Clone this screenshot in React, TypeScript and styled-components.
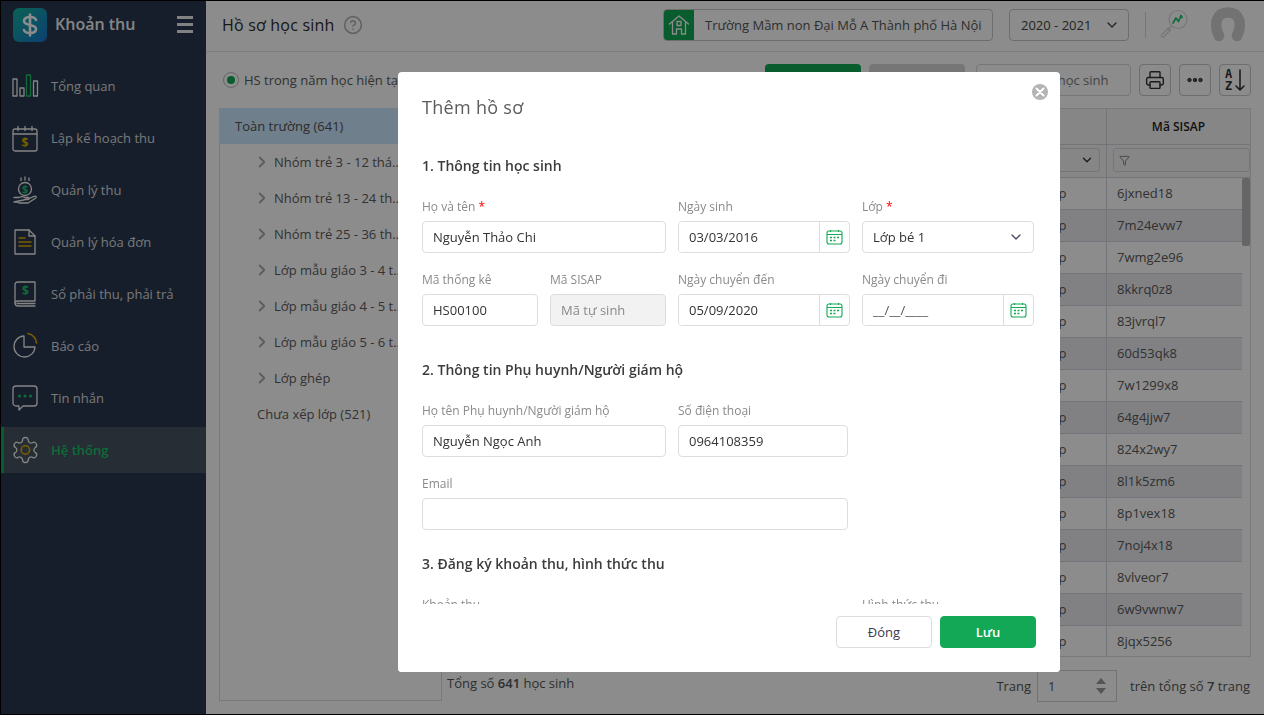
import React from 'react';
import styled, { createGlobalStyle } from 'styled-components';
import { ChevronDown, ChevronRight, CircleHelp, Printer, Funnel } from 'lucide-react';

const GREEN = '#12a855';
const STROKE = '#f2f2f2';
const GOLD = '#e0a800';
const ACCENT = '#1cc46a';

const Global = createGlobalStyle`
  * { box-sizing: border-box; }
  html, body { margin: 0; padding: 0; overflow: hidden; }
  body { font-family: "Open Sans", "Noto Sans", "Liberation Sans", sans-serif; font-size: 13px; color: #333; }
  input { font-family: inherit; }
`;

const Frame = styled.div`
  width: 1264px; height: 715px; display: flex; overflow: hidden;
  border-top: 1px solid #000; border-left: 1px solid #000; border-bottom: 1px solid #000;
  background: #fff;
`;
const Sidebar = styled.aside`
  width: 205px; flex: none; background: #28384f; display: flex; flex-direction: column;
`;
const Brand = styled.div`
  height: 62px; flex: none; display: flex; align-items: flex-start; padding: 7px 13px 0 12px;
`;
const Logo = styled.div`
  width: 34px; height: 34px; border-radius: 6px; flex: none;
  background: linear-gradient(135deg, #14b39a, #1575cf);
  display: flex; align-items: center; justify-content: center;
`;
const BrandName = styled.div`
  margin-left: 8px; flex: 1; font-size: 16px; font-weight: 600; line-height: 33px; color: #f2f2f2;
`;
const Burger = styled.div`
  width: 16px; margin-top: 8px; display: flex; flex-direction: column; gap: 4px;
  span { display: block; height: 3px; background: #ececec; }
`;
const Menu = styled.nav`display: flex; flex-direction: column; gap: 6px;`;
const MenuItem = styled.div<{ $active?: boolean }>`
  height: 46px; display: flex; align-items: center; gap: 10px;
  padding-left: ${p => (p.$active ? '7px' : '10px')};
  border-left: ${p => (p.$active ? `3px solid ${GREEN}` : 'none')};
  background: ${p => (p.$active ? '#465260' : 'transparent')};
  color: ${p => (p.$active ? ACCENT : '#dcdcdc')};
  font-weight: ${p => (p.$active ? 600 : 400)};
  font-size: 13px;
  svg { flex: none; }
`;
const Main = styled.main`flex: 1; min-width: 0; display: flex; flex-direction: column; background: #fff;`;
const TopBar = styled.header`
  height: 51px; flex: none; display: flex; align-items: center; padding: 0 18px 2px 16px;
  border-bottom: 1px solid #e6e6e6;
`;
const PageTitle = styled.h1`margin: 0; font-size: 16px; font-weight: 400; letter-spacing: 0.2px; color: #2c2c2c;`;
const Help = styled.span`display: flex; margin-left: 9px; color: #b5b5b5; flex: 1;`;
const School = styled.div`
  width: 330px; height: 32px; display: flex; align-items: center; border: 1px solid #c8c8c8; border-radius: 4px; overflow: hidden;
  color: #555; font-size: 13px; white-space: nowrap;
`;
const SchoolIcon = styled.span`
  width: 30px; height: 100%; background: ${GREEN}; display: flex; align-items: center; justify-content: center; margin-right: 11px; flex: none;
`;
const YearSelect = styled.div`
  width: 120px; height: 32px; margin-left: 16px; padding: 0 8px 0 11px; display: flex; align-items: center; justify-content: space-between;
  border: 1px solid #c8c8c8; border-radius: 4px; color: #444; font-size: 13px;
`;
const VDivider = styled.span`width: 1px; height: 26px; background: #d8d8d8; margin: 0 12px 0 16px;`;
const AvatarWrap = styled.span`display: flex; margin-left: 20px;`;
const Toolbar = styled.div`
  height: 32px; margin: 12px 13px 0; flex: none; display: flex; align-items: center; white-space: nowrap;
`;
const Radio = styled.span<{ $on?: boolean }>`
  width: 16px; height: 16px; border-radius: 50%; border: 1px solid #bbb; display: flex; align-items: center; justify-content: center; flex: none; margin-left: 4px; margin-right: 5px;
  &::after { content: ''; width: 8px; height: 8px; border-radius: 50%; background: ${p => (p.$on ? GREEN : 'transparent')}; }
`;
const RadioLabel = styled.span`color: #595959; font-size: 13px; margin-right: 4px;`;
const Spacer = styled.span`flex: 1;`;
const ToolBtn = styled.span<{ $primary?: boolean }>`
  width: 96px; height: 32px; border-radius: 4px; margin-right: 8px; display: flex; align-items: center; justify-content: center;
  background: ${p => (p.$primary ? GREEN : '#d8d8d8')}; color: ${p => (p.$primary ? '#fff' : '#555')};
`;
const SearchBox = styled.div`
  width: 155px; height: 32px; margin: 0 8px 0 3px; padding-left: 22px; display: flex; align-items: center;
  border: 1px solid #d8d8d8; border-radius: 4px; color: #7c7c7c; font-size: 13px;
`;
const IconBtn = styled.span`
  width: 32px; height: 32px; border: 1px solid #c8c8c8; border-radius: 4px; display: flex; align-items: center; justify-content: center; color: #333; flex: none;
  & + & { margin-left: 8px; }
`;
const Content = styled.div`flex: 1; min-height: 0; display: flex; margin: 12px 13px 13px;`;
const Tree = styled.div`width: 223px; flex: none; border: 1px solid #dcdcdc; display: flex; flex-direction: column;`;
const TreeHead = styled.div`height: 36px; margin: -1px 0 0 -1px; padding-left: 16px; display: flex; align-items: center; background: #cce8ff; color: #505050;`;
const TreeRow = styled.div`
  height: 36px; flex: none; padding: 0 36px 0 33px; display: flex; align-items: center; color: #5c5c5c; gap: 3px;
  svg { flex: none; color: #a8a8a8; }
`;
const TreeLeaf = styled.div`height: 36px; flex: none; padding-left: 37px; display: flex; align-items: center; color: #5c5c5c; white-space: nowrap;`;
const TreeLabel = styled.span`flex: 1; min-width: 0; overflow: hidden; white-space: nowrap; text-overflow: ellipsis;`;
const RightCol = styled.div`flex: 1; min-width: 0; display: flex; flex-direction: column;`;
const Table = styled.div`height: 549px; flex: none; border: 1px solid #dcdcdc; border-left: 0; overflow: hidden; position: relative;`;
const TableRow = styled.div<{ $alt?: boolean }>`
  display: grid; grid-template-columns: 1fr 110px 135px; height: 32px; border-bottom: 1px solid #d2d2dc;
  background: ${p => (p.$alt ? '#ebebf1' : 'transparent')};
  color: #595959; font-size: 13px; line-height: 31px;
  margin-right: 8px;
  > span { padding-left: 10px; border-right: 1px solid #d2d2dc; white-space: nowrap; overflow: hidden; }
  > span:nth-child(2) { padding-left: 13px; }
  > span:last-child { border-right: 0; }
`;
const HeadRow = styled.div`
  display: grid; grid-template-columns: 1fr 110px 143px; height: 36px; background: #f4f4f4; border-bottom: 1px solid #d2d2dc;
  font-weight: 600; font-size: 12px; color: #222; line-height: 35px; text-align: center;
  > span { border-right: 1px solid #d2d2dc; }
  > span:last-child { border-right: 0; }
`;
const HeadLeft = styled.span`padding-right: 40px;`;
const FilterRow = styled.div`
  display: grid; grid-template-columns: 1fr 110px 143px; height: 33px; background: #f4f4f4; border-bottom: 1px solid #d2d2dc;
  > span { border-right: 1px solid #d2d2dc; padding: 3px 6px 0 6px; }
  > span:last-child { border-right: 0; padding-right: 0; }
`;
const FilterBox = styled.div<{ $end?: boolean }>`
  height: 24px; border: 1px solid #d8d8d8; border-radius: 3px; display: flex; align-items: center; padding: 0 5px; color: #777;
  justify-content: ${p => (p.$end ? 'flex-end' : 'flex-start')};
`;
const Thumb = styled.div`position: absolute; right: 0; top: 69px; width: 8px; height: 68px; background: #b8b8b8; border-radius: 2px;`;
const Footer = styled.div`
  margin-top: 13px; height: 32px; flex: none; display: flex; align-items: flex-start; color: #555; padding: 0 1px 0 5px; font-size: 13px;
  b { font-weight: 600; }
`;
const TotalText = styled.span`flex: 1; line-height: 26px;`;
const Pager = styled.span`display: flex; align-items: center; height: 32px; white-space: nowrap;`;
const PageInput = styled.span`
  width: 80px; height: 32px; margin: 0 13px 0 6px; border: 1px solid #d0d0d0; padding: 0 10px; display: flex; align-items: center; justify-content: space-between;
`;
const Stepper = styled.span`
  display: flex; flex-direction: column; gap: 4px;
  i { display: block; width: 0; height: 0; border-left: 5px solid transparent; border-right: 5px solid transparent; }
  i:first-child { border-bottom: 6px solid #999; }
  i:last-child { border-top: 6px solid #999; }
`;

const Overlay = styled.div`
  position: fixed; inset: 0; background: rgba(0, 0, 0, 0.45);
`;
const Modal = styled.section`
  position: fixed; left: 398px; top: 72px; width: 662px; height: 600px; background: #fff; border-radius: 4px;
  display: flex; flex-direction: column; overflow: hidden;
`;
const ModalHead = styled.div`height: 46px; flex: none; padding: 24px 0 0 24px;`;
const ModalTitle = styled.h2`margin: 0; font-size: 18px; line-height: 22px; font-weight: 400; letter-spacing: 0.3px; color: #5c5c5c;`;
const CloseBtn = styled.span`
  position: absolute; top: 12px; right: 12px; width: 16px; height: 16px; border-radius: 50%; background: #b4b4b4; display: flex; align-items: center; justify-content: center;
`;
const ModalBody = styled.div`
  flex: 1; min-height: 0; overflow-y: scroll; padding: 38px 18px 0 24px;
  &::-webkit-scrollbar { width: 8px; }
  &::-webkit-scrollbar-track { background: #fff; }
  &::-webkit-scrollbar-thumb { background: #c4c4c4; border-radius: 4px; }
`;
const SectionTitle = styled.h3<{ $gap?: number }>`
  margin: ${p => p.$gap ?? 0}px 0 22px; font-size: 14px; line-height: 20px; font-weight: 600; color: #3c3c3c;
`;
const FormGrid = styled.div`
  display: grid; grid-template-columns: 116px 116px 172px 172px; column-gap: 12px; row-gap: 18px;
`;
const Field = styled.div<{ $span?: number; $col?: number; $w?: number }>`
  grid-column: ${p => (p.$col ? `${p.$col} / span ${p.$span ?? 1}` : `span ${p.$span ?? 1}`)};
  width: ${p => (p.$w ? `${p.$w}px` : 'auto')};
  min-width: 0;
`;
const Label = styled.label`display: block; height: 18px; margin-bottom: 5px; font-size: 12px; line-height: 18px; color: #8a8a8a; white-space: nowrap;`;
const Req = styled.span`color: #f00;`;
const TextInput = styled.input<{ $off?: boolean }>`
  display: block; width: 100%; height: 32px; padding: 0 10px; border: 1px solid #ddd; border-radius: 4px; outline: 0;
  font-size: 13px; color: #333; background: ${p => (p.$off ? '#f2f2f2' : '#fff')};
  &::placeholder { color: #8a8a8a; opacity: 1; }
`;
const DateBox = styled.div`display: flex; height: 32px; border: 1px solid #ddd; border-radius: 4px; overflow: hidden;`;
const DateInput = styled.input`
  flex: 1; min-width: 0; height: 100%; padding: 0 10px; border: 0; outline: 0; font-size: 13px; color: #333;
  &::placeholder { color: #555; opacity: 1; }
`;
const DateAddon = styled.span`width: 30px; flex: none; border-left: 1px solid #ddd; display: flex; align-items: center; justify-content: center;`;
const SelectBox = styled.div`
  height: 32px; padding: 0 9px 0 10px; border: 1px solid #ddd; border-radius: 4px; display: flex; align-items: center; justify-content: space-between; color: #333; font-size: 13px;
  svg { color: #4a4a60; }
`;
const FeeBox = styled.div`height: 530px; border: 1px solid #ddd; border-radius: 4px;`;
const ModalFoot = styled.div`height: 68px; flex: none; background: #fff; padding: 12px 24px; display: flex; justify-content: flex-end; gap: 8px;`;
const Btn = styled.button<{ $primary?: boolean }>`
  width: 96px; height: 32px; border-radius: 4px; font-family: inherit; font-size: 13px; cursor: pointer;
  font-weight: ${p => (p.$primary ? 600 : 400)};
  border: 1px solid ${p => (p.$primary ? GREEN : '#ddd')};
  background: ${p => (p.$primary ? GREEN : '#fff')};
  color: ${p => (p.$primary ? '#fff' : '#3a3a50')};
`;

const Ic = ({ children, size = 30 }: { children: React.ReactNode; size?: number }) => (
  <svg width={size} height={size} viewBox="0 0 30 30" fill="none" stroke={STROKE} strokeWidth={1.3} strokeLinejoin="round" strokeLinecap="round">{children}</svg>
);

const IconBars = () => (
  <Ic>
    <rect x="2" y="8" width="4" height="17" />
    <rect x="9" y="17" width="4" height="8" />
    <rect x="15.5" y="4" width="4" height="21" stroke={ACCENT} />
    <rect x="22.5" y="10" width="4" height="15" />
  </Ic>
);
const IconPlan = () => (
  <Ic>
    <rect x="2" y="6" width="24" height="22" rx="2" />
    <path d="M2 11h24M7 3.500v4M14 3.500v4M21 3.500v4" />
    <text x="14" y="24" textAnchor="middle" fontSize="12" fontWeight="700" fill={GOLD} stroke="none" fontFamily="Open Sans">$</text>
  </Ic>
);
const IconCollect = () => (
  <Ic>
    <circle cx="14" cy="14" r="6.5" />
    <text x="14" y="18" textAnchor="middle" fontSize="10.5" fontWeight="700" fill={ACCENT} stroke="none" fontFamily="Open Sans">$</text>
    <path d="M14 2v3M10 3v2.500M18 3v2.500" />
    <path d="M3 22.500h5c2-1.200 4-1 6 0h3c1.500 0 1.500 2 0 2h-4M17 24l6-2.600c2-.6 3 .6 1.500 1.800L17 28H8l-2-1H3z" />
  </Ic>
);
const IconInvoice = () => (
  <Ic>
    <path d="M4 3h14l6 6v18H4z" />
    <path d="M18 3v6h6" />
    <path d="M8 11h6M8 15h12M8 19h12" stroke={GOLD} strokeWidth="1.6" />
  </Ic>
);
const IconBook = () => (
  <Ic>
    <path d="M7 3h17v19H7c-2 0-3 1-3 2V6c0-2 1-3 3-3z" />
    <path d="M4 24c0 2 1 3 3 3h17M6 24.500h18" />
    <text x="14.5" y="16" textAnchor="middle" fontSize="12" fontWeight="700" fill={ACCENT} stroke="none" fontFamily="Open Sans">$</text>
  </Ic>
);
const IconPie = () => (
  <Ic>
    <path d="M13 5a10.500 10.500 0 1 0 11 11H13z" />
    <path d="M17 2.500A10.500 10.500 0 0 1 25.500 12" stroke={GOLD} strokeWidth="1.6" />
  </Ic>
);
const IconChat = () => (
  <Ic>
    <path d="M5 3h18a3 3 0 0 1 3 3v14a3 3 0 0 1-3 3H12l-4 4v-4H5a3 3 0 0 1-3-3V6a3 3 0 0 1 3-3z" />
    <circle cx="8.5" cy="13" r="1.6" fill={ACCENT} stroke="none" />
    <circle cx="14" cy="13" r="1.6" fill={ACCENT} stroke="none" />
    <circle cx="19.5" cy="13" r="1.6" fill={ACCENT} stroke="none" />
  </Ic>
);
const IconGear = () => (
  <svg width="30" height="30" viewBox="0 0 24 24" fill="none" stroke={STROKE} strokeWidth="1.05" strokeLinejoin="round">
    <g transform="translate(-0.5 0)">
      <path d="M12.220 2h-.44a2 2 0 0 0-2 2v.18a2 2 0 0 1-1 1.730l-.43.25a2 2 0 0 1-2 0l-.15-.08a2 2 0 0 0-2.730.73l-.22.38a2 2 0 0 0 .73 2.730l.15.1a2 2 0 0 1 1 1.720v.51a2 2 0 0 1-1 1.740l-.15.09a2 2 0 0 0-.73 2.730l.22.38a2 2 0 0 0 2.730.73l.15-.08a2 2 0 0 1 2 0l.43.25a2 2 0 0 1 1 1.730V20a2 2 0 0 0 2 2h.44a2 2 0 0 0 2-2v-.18a2 2 0 0 1 1-1.730l.43-.25a2 2 0 0 1 2 0l.15.08a2 2 0 0 0 2.730-.73l.22-.39a2 2 0 0 0-.73-2.730l-.15-.08a2 2 0 0 1-1-1.740v-.5a2 2 0 0 1 1-1.740l.15-.09a2 2 0 0 0 .73-2.730l-.22-.38a2 2 0 0 0-2.730-.73l-.15.08a2 2 0 0 1-2 0l-.43-.25a2 2 0 0 1-1-1.730V4a2 2 0 0 0-2-2z" />
      <circle cx="12" cy="12" r="3.4" stroke={GOLD} strokeWidth="1.3" />
    </g>
  </svg>
);
const IconDollar = () => (
  <svg width="18" height="24" viewBox="0 0 18 24" fill="none" stroke="#fff" strokeWidth="2.6" strokeLinecap="round">
    <path d="M15 7c-.6-2-3-3-6-3S3 5 3 8c0 2.400 2.400 3.200 6 4s6 1.600 6 4c0 3-3 4-6 4s-5.400-1-6-3" />
    <path d="M9 1.500v21" />
  </svg>
);
const IconHome = () => (
  <svg width="22" height="22" viewBox="0 0 22 22" fill="none" stroke="#fff" strokeWidth="1.3" strokeLinejoin="round" strokeLinecap="round">
    <path d="M1.500 10 11 2l9.500 8" />
    <path d="M4.500 8.500V20h4v-5h5v5h4V8.500" />
    <rect x="9" y="7.500" width="4" height="4" />
  </svg>
);
const IconScope = () => (
  <svg width="32" height="34" viewBox="0 0 32 34" fill="none" stroke="#d8d8d8" strokeWidth="1.2" strokeLinecap="round" strokeLinejoin="round">
    <circle cx="20" cy="11.500" r="9" />
    <path d="M13.500 18 10 21.500M10.500 20 3.500 27c-1 1.200 1 3 2 2l7-7-2.500-2z" />
    <path d="M15 15l3-5 2.500 3.500L23 7.500l1 2" stroke={ACCENT} strokeWidth="1.7" />
  </svg>
);
const IconAvatar = () => (
  <svg width="36" height="36" viewBox="0 0 36 36" fill="none" stroke="#d0d0d0" strokeWidth="10.5" strokeLinecap="round">
    <path d="M9 29C3 16 7 5.500 18 5.500S33 16 27 29" />
  </svg>
);
const IconCalendar = () => (
  <svg width="17" height="16" viewBox="0 0 17 16" fill="none" stroke={GREEN} strokeWidth="1.1" strokeLinejoin="round">
    <rect x="1" y="2" width="15" height="13" rx="2" />
    <path d="M1 5.500h15M4.500 1v2M12.500 1v2" />
    <path d="M4 8.500h2M7.500 8.500h2M11 8.500h2M4 11.500h2M7.500 11.500h2" strokeWidth="1.400" />
  </svg>
);
const IconDots = () => (
  <svg width="16" height="6" viewBox="0 0 16 6" fill="#555" stroke="#333" strokeWidth="1">
    <circle cx="2.500" cy="3" r="1.700" />
    <circle cx="8" cy="3" r="1.700" />
    <circle cx="13.500" cy="3" r="1.700" />
  </svg>
);
const IconSort = () => (
  <svg width="24" height="26" viewBox="0 0 24 26" fill="none" stroke="#333" strokeWidth="1.600" strokeLinecap="round" strokeLinejoin="round">
    <text x="5.500" y="11" textAnchor="middle" fontSize="12" fontWeight="700" fill="#333" stroke="none" fontFamily="DejaVu Sans Mono">A</text>
    <text x="5.500" y="23" textAnchor="middle" fontSize="12" fontWeight="700" fill="#333" stroke="none" fontFamily="DejaVu Sans Mono">Z</text>
    <path d="M17 3v20M13 19l4 4 4-4" />
  </svg>
);

const menu: { label: string; icon: React.ReactNode; active?: boolean }[] = [
  { label: 'Tổng quan', icon: <IconBars /> },
  { label: 'Lập kế hoạch thu', icon: <IconPlan /> },
  { label: 'Quản lý thu', icon: <IconCollect /> },
  { label: 'Quản lý hóa đơn', icon: <IconInvoice /> },
  { label: 'Sổ phải thu, phải trả', icon: <IconBook /> },
  { label: 'Báo cáo', icon: <IconPie /> },
  { label: 'Tin nhắn', icon: <IconChat /> },
  { label: 'Hệ thống', icon: <IconGear />, active: true },
];

const tree = [
  'Nhóm trẻ 3 - 12 tháng (24)',
  'Nhóm trẻ 13 - 24 tháng (30)',
  'Nhóm trẻ 25 - 36 tháng (16)',
  'Lớp mẫu giáo 3 - 4 tuổi (20)',
  'Lớp mẫu giáo 4 - 5 tuổi (15)',
  'Lớp mẫu giáo 5 - 6 tuổi (15)',
  'Lớp ghép',
];

const codes = ['6jxned18', '7m24evw7', '7wmg2e96', '8kkrq0z8', '83jvrql7', '60d53qk8', '7w1299x8', '64g4jjw7', '824x2wy7', '8l1k5zm6', '8p1vex18', '7noj4x18', '8vlveor7', '6w9vwnw7', '8jqx5256'];

const DateField = ({ label, value }: { label: string; value?: string }) => (
  <Field>
    <Label>{label}</Label>
    <DateBox>
      <DateInput readOnly value={value ?? ''} placeholder="__/__/____" />
      <DateAddon><IconCalendar /></DateAddon>
    </DateBox>
  </Field>
);

export default function App() {
  return (
    <>
      <Global />
      <Frame>
        <Sidebar>
          <Brand>
            <Logo><IconDollar /></Logo>
            <BrandName>Khoản thu</BrandName>
            <Burger><span /><span /><span /></Burger>
          </Brand>
          <Menu>
            {menu.map(m => (
              <MenuItem key={m.label} $active={m.active}>
                {m.icon}
                <span>{m.label}</span>
              </MenuItem>
            ))}
          </Menu>
        </Sidebar>
        <Main>
          <TopBar>
            <PageTitle>Hồ sơ học sinh</PageTitle>
            <Help><CircleHelp size={20} strokeWidth={2} /></Help>
            <School>
              <SchoolIcon><IconHome /></SchoolIcon>
              Trường Mầm non Đại Mỗ A Thành phố Hà Nội
            </School>
            <YearSelect>2020 - 2021 <ChevronDown size={16} /></YearSelect>
            <VDivider />
            <IconScope />
            <AvatarWrap><IconAvatar /></AvatarWrap>
          </TopBar>
          <Toolbar>
            <Radio $on />
            <RadioLabel>HS trong năm học hiện tại</RadioLabel>
            <Radio />
            <RadioLabel>Tất cả</RadioLabel>
            <Spacer />
            <ToolBtn $primary>Thêm hồ sơ</ToolBtn>
            <ToolBtn>Xóa</ToolBtn>
            <SearchBox>Tìm kiếm học sinh</SearchBox>
            <IconBtn><Printer size={20} strokeWidth={1.7} /></IconBtn>
            <IconBtn><IconDots /></IconBtn>
            <IconBtn><IconSort /></IconBtn>
          </Toolbar>
          <Content>
            <Tree>
              <TreeHead>Toàn trường (641)</TreeHead>
              {tree.map(t => (
                <TreeRow key={t}><ChevronRight size={18} strokeWidth={2.4} /><TreeLabel>{t}</TreeLabel></TreeRow>
              ))}
              <TreeLeaf>Chưa xếp lớp (521)</TreeLeaf>
            </Tree>
            <RightCol>
              <Table>
                <HeadRow><span>Họ và tên</span><HeadLeft>Lớp</HeadLeft><span>Mã SISAP</span></HeadRow>
                <FilterRow>
                  <span><FilterBox /></span>
                  <span><FilterBox $end><ChevronDown size={14} strokeWidth={2.4} color="#333" /></FilterBox></span>
                  <span><FilterBox><Funnel size={11} /></FilterBox></span>
                </FilterRow>
                {codes.map((c, i) => (
                  <TableRow key={c} $alt={i % 2 === 1}>
                    <span />
                    <span>Lớp ghép</span>
                    <span>{c}</span>
                  </TableRow>
                ))}
                <Thumb />
              </Table>
              <Footer>
                <TotalText>Tổng số <b>641</b> học sinh</TotalText>
                <Pager>
                  Trang
                  <PageInput>1<Stepper><i /><i /></Stepper></PageInput>
                  trên tổng số&nbsp;<b>7</b>&nbsp;trang
                </Pager>
              </Footer>
            </RightCol>
          </Content>
        </Main>
      </Frame>
      <Overlay />
      <Modal>
        <ModalHead><ModalTitle>Thêm hồ sơ</ModalTitle></ModalHead>
        <CloseBtn>
          <svg width="10" height="10" viewBox="0 0 10 10" stroke="#fff" strokeWidth="2" strokeLinecap="round"><path d="M1.500 1.500l7 7M8.500 1.500l-7 7" /></svg>
        </CloseBtn>
        <ModalBody>
          <SectionTitle>1. Thông tin học sinh</SectionTitle>
          <FormGrid>
            <Field $span={2}>
              <Label>Họ và tên <Req>*</Req></Label>
              <TextInput readOnly value="Nguyễn Thảo Chi" />
            </Field>
            <DateField label="Ngày sinh" value="03/03/2016" />
            <Field>
              <Label>Lớp <Req>*</Req></Label>
              <SelectBox>Lớp bé 1 <ChevronDown size={16} strokeWidth={2} /></SelectBox>
            </Field>
            <Field>
              <Label>Mã thống kê</Label>
              <TextInput readOnly value="HS00100" />
            </Field>
            <Field>
              <Label>Mã SISAP</Label>
              <TextInput $off readOnly placeholder="Mã tự sinh" />
            </Field>
            <DateField label="Ngày chuyển đến" value="05/09/2020" />
            <DateField label="Ngày chuyển đi" />
          </FormGrid>
          <SectionTitle $gap={34}>2. Thông tin Phụ huynh/Người giám hộ</SectionTitle>
          <FormGrid>
            <Field $span={2}>
              <Label>Họ tên Phụ huynh/Người giám hộ</Label>
              <TextInput readOnly value="Nguyễn Ngọc Anh" />
            </Field>
            <Field $w={170}>
              <Label>Số điện thoại</Label>
              <TextInput readOnly value="0964108359" />
            </Field>
            <Field $col={1} $span={3} $w={426}>
              <Label>Email</Label>
              <TextInput readOnly value="" />
            </Field>
          </FormGrid>
          <SectionTitle $gap={24}>3. Đăng ký khoản thu, hình thức thu</SectionTitle>
          <FormGrid>
            <Field $span={3}>
              <Label>Khoản thu</Label>
              <FeeBox />
            </Field>
            <Field>
              <Label>Hình thức thu</Label>
              <SelectBox />
            </Field>
          </FormGrid>
        </ModalBody>
        <ModalFoot>
          <Btn>Đóng</Btn>
          <Btn $primary>Lưu</Btn>
        </ModalFoot>
      </Modal>
    </>
  );
}
